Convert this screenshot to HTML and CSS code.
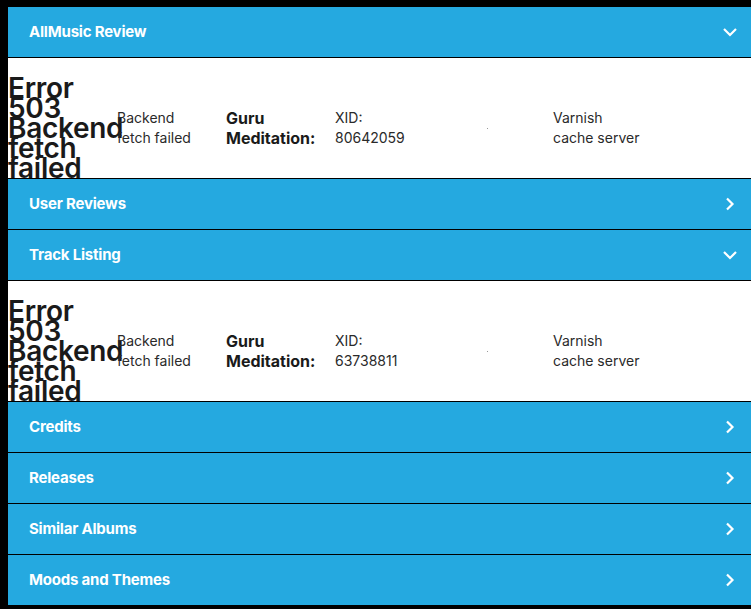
FILE: index.html
```html
<!DOCTYPE html>
<html>
<head>
<meta charset="utf-8">
<link rel="stylesheet" href="styles.css">
</head>
<body>
<div class="page">
  <div class="bar"><span class="bar-title">AllMusic Review</span><svg class="chev" width="16" height="16" viewBox="0 0 16 16"><path d="M2 5 L8 11 L14 5" fill="none" stroke="#fff" stroke-width="2.2"/></svg></div>
  <div class="panel">
    <div class="err">
      <h1 class="err-title">Error 503 Backend fetch failed</h1>
      <p class="cell">Backend fetch failed</p>
      <h3 class="cell guru">Guru Meditation:</h3>
      <p class="cell">XID: 80642059</p>
      <div class="cell"><span class="dot"></span></div>
      <p class="cell">Varnish cache server</p>
    </div>
  </div>
  <div class="bar"><span class="bar-title">User Reviews</span><svg class="chev" width="16" height="16" viewBox="0 0 16 16"><path d="M5 2.5 L10.5 8 L5 13.5" fill="none" stroke="#fff" stroke-width="2.2"/></svg></div>
  <div class="bar"><span class="bar-title">Track Listing</span><svg class="chev" width="16" height="16" viewBox="0 0 16 16"><path d="M2 5 L8 11 L14 5" fill="none" stroke="#fff" stroke-width="2.2"/></svg></div>
  <div class="panel">
    <div class="err">
      <h1 class="err-title">Error 503 Backend fetch failed</h1>
      <p class="cell">Backend fetch failed</p>
      <h3 class="cell guru">Guru Meditation:</h3>
      <p class="cell">XID: 63738811</p>
      <div class="cell"><span class="dot"></span></div>
      <p class="cell">Varnish cache server</p>
    </div>
  </div>
  <div class="bar"><span class="bar-title">Credits</span><svg class="chev" width="16" height="16" viewBox="0 0 16 16"><path d="M5 2.5 L10.5 8 L5 13.5" fill="none" stroke="#fff" stroke-width="2.2"/></svg></div>
  <div class="bar"><span class="bar-title">Releases</span><svg class="chev" width="16" height="16" viewBox="0 0 16 16"><path d="M5 2.5 L10.5 8 L5 13.5" fill="none" stroke="#fff" stroke-width="2.2"/></svg></div>
  <div class="bar"><span class="bar-title">Similar Albums</span><svg class="chev" width="16" height="16" viewBox="0 0 16 16"><path d="M5 2.5 L10.5 8 L5 13.5" fill="none" stroke="#fff" stroke-width="2.2"/></svg></div>
  <div class="bar"><span class="bar-title">Moods and Themes</span><svg class="chev" width="16" height="16" viewBox="0 0 16 16"><path d="M5 2.5 L10.5 8 L5 13.5" fill="none" stroke="#fff" stroke-width="2.2"/></svg></div>
</div>
</body>
</html>
```
FILE: styles.css
```css
html, body {
  background: #000;
}
body {
  margin: 7px 0 0 8px;
  font-family: Inter, "Liberation Sans", sans-serif;
  overflow: hidden;
}
.page {
  display: flex;
  flex-direction: column;
}
.bar {
  height: 50px;
  background: #25a9e0;
  border-bottom: 1px solid #000;
  display: flex;
  align-items: center;
  justify-content: space-between;
  padding: 0 13px 0 21px;
}
.bar-title {
  color: #fff;
  font-weight: 700;
  font-size: 15px;
  letter-spacing: -0.2px;
  margin-top: -1px;
}
.chev {
  display: block;
}
.panel {
  height: 120px;
  background: #fff;
  border-bottom: 1px solid #000;
  position: relative;
  z-index: 0;
}
.err {
  display: grid;
  grid-template-columns: repeat(6, 109px);
  align-items: center;
  padding: 20px 0;
  color: #222;
}
.err-title {
  margin: 0;
  font-size: 28px;
  font-weight: 600;
  line-height: 20px;
  letter-spacing: -0.3px;
  color: #1a1a1a;
}
.cell {
  margin: 0;
  padding-right: 22px;
  font-size: 14px;
  line-height: 20px;
  font-weight: 400;
  color: #2a2a2a;
}
.guru {
  font-size: 16px;
  font-weight: 700;
  color: #1a1a1a;
}
.dot {
  display: block;
  width: 1px;
  height: 1px;
  margin-left: 43px;
  background: #999;
}
```
